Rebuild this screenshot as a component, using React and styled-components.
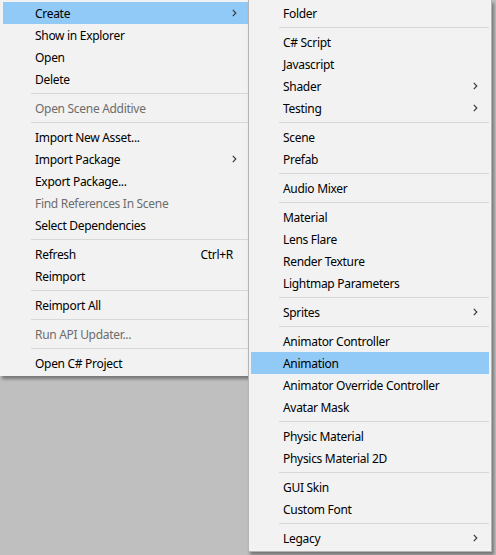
import React from "react";
import styled, { createGlobalStyle } from "styled-components";

const GlobalStyle = createGlobalStyle`
  html, body {
    margin: 0;
    padding: 0;
    background: #bfbfbf;
    width: 496px;
    height: 555px;
    overflow: hidden;
  }
  body {
    font-family: "Segoe UI", "Noto Sans", "Open Sans", sans-serif;
    font-size: 12px;
    -webkit-font-smoothing: antialiased;
  }
`;

const SEP = "-";

const mainItems = [
  { label: "Create", sub: true, active: true },
  { label: "Show in Explorer" },
  { label: "Open" },
  { label: "Delete" },
  SEP,
  { label: "Open Scene Additive", disabled: true },
  SEP,
  { label: "Import New Asset..." },
  { label: "Import Package", sub: true },
  { label: "Export Package..." },
  { label: "Find References In Scene", disabled: true },
  { label: "Select Dependencies" },
  SEP,
  { label: "Refresh", shortcut: "Ctrl+R" },
  { label: "Reimport" },
  SEP,
  { label: "Reimport All" },
  SEP,
  { label: "Run API Updater...", disabled: true },
  SEP,
  { label: "Open C# Project" },
];

const createItems = [
  { label: "Folder" },
  SEP,
  { label: "C# Script" },
  { label: "Javascript" },
  { label: "Shader", sub: true },
  { label: "Testing", sub: true },
  SEP,
  { label: "Scene" },
  { label: "Prefab" },
  SEP,
  { label: "Audio Mixer" },
  SEP,
  { label: "Material" },
  { label: "Lens Flare" },
  { label: "Render Texture" },
  { label: "Lightmap Parameters" },
  SEP,
  { label: "Sprites", sub: true },
  SEP,
  { label: "Animator Controller" },
  { label: "Animation", active: true },
  { label: "Animator Override Controller" },
  { label: "Avatar Mask" },
  SEP,
  { label: "Physic Material" },
  { label: "Physics Material 2D" },
  SEP,
  { label: "GUI Skin" },
  { label: "Custom Font" },
  SEP,
  { label: "Legacy", sub: true },
];

const Chevron = () => (
  <svg width="5" height="8" viewBox="0 0 5 8">
    <polyline
      points="0.8,0.8 3.8,4 0.8,7.2"
      fill="none"
      stroke="#3c3c3c"
      strokeWidth="1.2"
    />
  </svg>
);

const Menu = ({ items, className }) => (
  <Panel className={className}>
    {items.map((it, i) =>
      it === SEP ? (
        <Separator key={i} />
      ) : (
        <Row key={i} $active={it.active} $disabled={it.disabled}>
          <Label>{it.label}</Label>
          {it.shortcut && <Shortcut>{it.shortcut}</Shortcut>}
          {it.sub && (
            <Arrow>
              <Chevron />
            </Arrow>
          )}
        </Row>
      )
    )}
  </Panel>
);

export default function App() {
  return (
    <>
      <GlobalStyle />
      <Screen>
        <MainMenu items={mainItems} />
        <SubMenu items={createItems} />
      </Screen>
    </>
  );
}

const Screen = styled.div`
  display: flex;
  align-items: flex-start;
`;

const Panel = styled.div`
  background: #f2f2f2;
  padding: 2px 0;
  box-sizing: border-box;
  box-shadow: 2px 3px 3px rgba(0, 0, 0, 0.38);
`;

const MainMenu = styled(Menu)`
  width: 248px;
  padding-left: 3px;
  position: relative;
  z-index: 1;
`;

const SubMenu = styled(Menu)`
  width: 244px;
  padding: 2px;
  border: 1px solid #b4b4b4;
  border-top: none;
  position: relative;
  z-index: 2;
  margin-left: 0;
`;

const Row = styled.div`
  height: 22px;
  display: flex;
  align-items: center;
  padding-left: 32px;
  padding-right: 8px;
  background: ${(p) => (p.$active ? "#91c9f7" : "transparent")};
  color: ${(p) => (p.$disabled ? "#6d6d6d" : "#000000")};
  letter-spacing: -0.3px;
  white-space: nowrap;
`;

const Label = styled.span`
  flex: 1;
`;

const Shortcut = styled.span`
  margin-right: 7px;
`;

const Arrow = styled.span`
  display: flex;
  align-items: center;
  width: 8px;
  justify-content: flex-start;
`;

const Separator = styled.div`
  height: 1px;
  margin: 3px 0 3px 28px;
  background: #d7d7d7;
`;
